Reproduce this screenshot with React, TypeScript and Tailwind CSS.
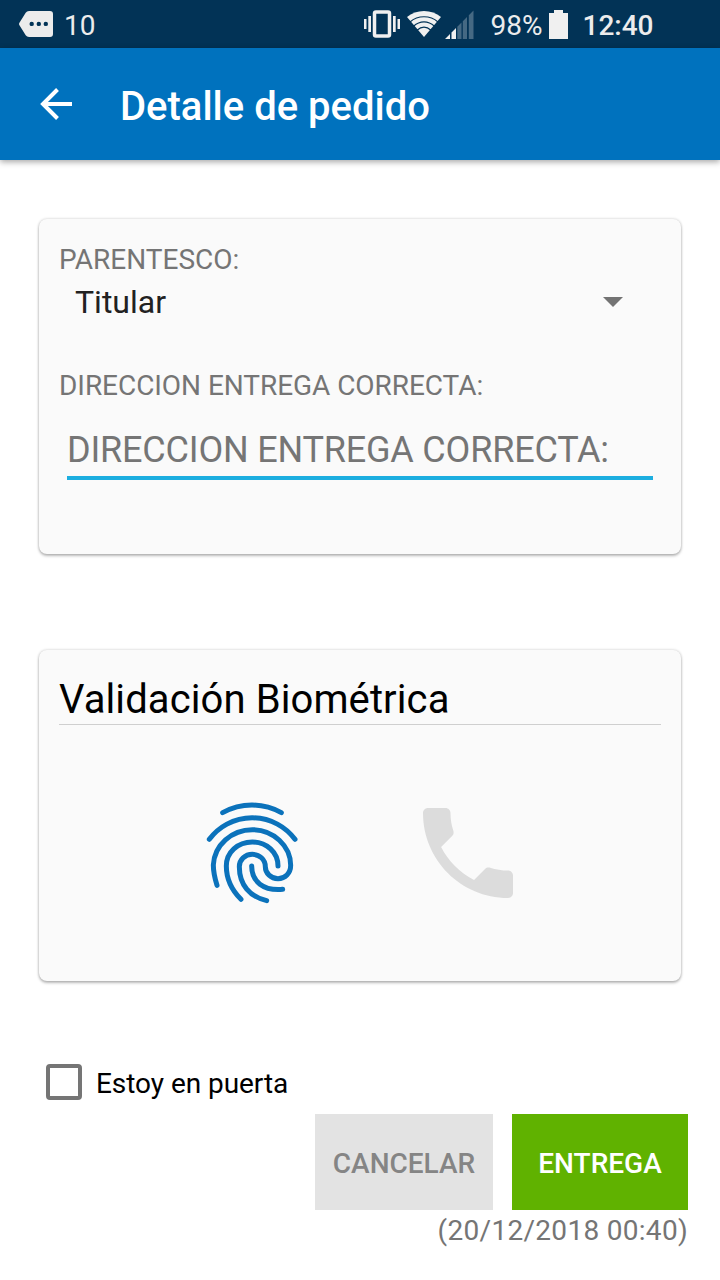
import type { ReactNode } from 'react';

interface CardProps {
  className: string;
  children: ReactNode;
}

function NotificationIcon() {
  return (
    <svg width="34" height="26" viewBox="0 0 34 26">
      <path
        fill="#ececec"
        fillRule="evenodd"
        d="M10 0H31a3 3 0 0 1 3 3V23a3 3 0 0 1-3 3H10a4 4 0 0 1-3.300-1.800L.6 14.500a2.500 2.500 0 0 1 0-3L6.700 1.800A4 4 0 0 1 10 0ZM12.700 10.700a2.200 2.200 0 1 0 0 4.400a2.200 2.200 0 1 0 0-4.400ZM19.800 10.700a2.200 2.200 0 1 0 0 4.400a2.200 2.200 0 1 0 0-4.400ZM26.800 10.700a2.200 2.200 0 1 0 0 4.400a2.200 2.200 0 1 0 0-4.400Z"
      />
    </svg>
  );
}

function VibrateIcon() {
  return (
    <svg width="36" height="28" viewBox="0 0 36 28" fill="#f0f0f0">
      <rect x="0" y="9" width="2.500" height="10" />
      <rect x="4.300" y="6" width="2.700" height="16" />
      <rect x="10.500" y="2" width="15" height="24" rx="1.500" fill="none" stroke="#f0f0f0" strokeWidth="3.500" />
      <rect x="29" y="6" width="2.700" height="16" />
      <rect x="33.500" y="9" width="2.500" height="10" />
    </svg>
  );
}

function WifiIcon() {
  return (
    <svg width="34" height="26" viewBox="0 0 34 26">
      <path fill="#f0f0f0" d="M17 26 0 6C9-2 25-2 34 6Z" />
      <g fill="none" stroke="#023356" strokeWidth="1.200">
        <path d="M3 11C11 4 23 4 31 11" />
        <path d="M6.500 15.300C13 9.500 21 9.500 27.500 15.300" />
        <path d="M10 19.300C14.500 15.300 19.500 15.300 24 19.300" />
      </g>
    </svg>
  );
}

function SignalIcon() {
  return (
    <svg width="29" height="29" viewBox="0 0 29 29">
      <path fill="#f0f0f0" d="M0 29 5 24V29ZM6.500 22.500 11 18V29H6.500Z" />
      <path
        fill="#456983"
        d="M12.300 16.700 16.500 12.500V29H12.300ZM17.800 11.200 22 7V29H17.800ZM23.800 5.200 28.500 .5V29H23.800Z"
      />
    </svg>
  );
}

function BatteryIcon() {
  return (
    <svg width="19" height="29" viewBox="0 0 19 29">
      <path fill="#f0f0f0" d="M5 0H14V3H19V29H0V3H5Z" />
    </svg>
  );
}

function BackIcon() {
  return (
    <svg width="32" height="32" viewBox="0 0 32 32">
      <path d="M17.500 1.500 3 16 17.500 30.500M3 16H32" fill="none" stroke="#fff" strokeWidth="4" />
    </svg>
  );
}

function FingerprintIcon() {
  return (
    <svg
      width="130"
      height="140"
      viewBox="0 0 390 420"
      fill="none"
      stroke="#0b72bb"
      strokeWidth="15"
      strokeLinecap="round"
    >
      <path d="M98 98A180 180 0 0 1 274 98" />
      <path d="M58 178A160 160 0 0 1 315 178" />
      <path d="M81 316C73 290 70 270 70 255C73 195 125 149 187 149C250 149 302 198 302 256C302 280 285 296 264 296C243 296 226 280 226 260C226 238 208 223 187 223C165 223 148 239 148 260C148 315 180 350 230 362" />
      <path d="M153 358C120 325 109 295 109 258C109 217 143 186 187 186C230 186 264 217 264 258" />
      <path d="M185 258C185 305 220 333 278 328" />
    </svg>
  );
}

function PhoneIcon() {
  return (
    <svg width="120" height="120" viewBox="0 0 24 24" fill="#dcdcdc">
      <path d="M6.620 10.790c1.440 2.830 3.760 5.140 6.590 6.590l2.200-2.200c.27-.27.67-.36 1.020-.24 1.120.37 2.330.57 3.570.57.55 0 1 .45 1 1V20c0 .55-.45 1-1 1-9.390 0-17-7.610-17-17 0-.55.45-1 1-1h3.500c.55 0 1 .45 1 1 0 1.250.2 2.450.57 3.570.11.35.03.74-.25 1.020l-2.200 2.200z" />
    </svg>
  );
}

function Card({ className, children }: CardProps) {
  return (
    <section
      className={`mx-[39px] rounded-lg bg-[#fafafa] px-5 shadow-[0_0_3px_rgba(0,0,0,0.2),0_2px_3px_rgba(0,0,0,0.25)] ${className}`}
    >
      {children}
    </section>
  );
}

function StatusBar() {
  return (
    <div className="flex h-12 items-center bg-[#023356] pt-1 pl-[19px] text-[28px] leading-8 text-[#ececec]">
      <div className="-mt-1">
        <NotificationIcon />
      </div>
      <span className="ml-[11px]">10</span>
      <div className="-mt-1 ml-[269px] flex items-center">
        <VibrateIcon />
        <div className="ml-[7px]">
          <WifiIcon />
        </div>
        <div className="ml-1">
          <SignalIcon />
        </div>
      </div>
      <span className="ml-4 w-[52px] whitespace-nowrap">98%</span>
      <div className="-mt-1 ml-[7px]">
        <BatteryIcon />
      </div>
      <span className="ml-3.5 font-medium">12:40</span>
    </div>
  );
}

export default function App() {
  return (
    <div className="flex h-[1280px] w-[720px] flex-col overflow-hidden bg-white font-[Roboto,sans-serif]">
      <StatusBar />
      <header className="flex h-28 shrink-0 items-center bg-[#0072be] pl-10 shadow-[0_2px_6px_rgba(0,0,0,0.35)]">
        <BackIcon />
        <h1 className="mt-1.5 ml-12 text-[40px] leading-12 font-medium text-white">Detalle de pedido</h1>
      </header>

      <Card className="mt-[59px] h-[335px] shrink-0 pt-[25px]">
        <p className="text-[28px] leading-8 text-[#757575]">PARENTESCO:</p>
        <button className="flex h-[52px] w-full items-center justify-between pr-[38px] pl-4 text-left text-[32px] text-[#212121]">
          Titular
          <svg width="20" height="10" viewBox="0 0 20 10">
            <path d="M0 0H20L10 10Z" fill="#737373" />
          </svg>
        </button>
        <p className="mt-[42px] text-[28px] leading-8 tracking-[-0.05px] text-[#757575]">DIRECCION ENTREGA CORRECTA:</p>
        <input
          className="mt-6 ml-2 block h-[54px] w-[586px] border-b-4 border-[#1caee0] pb-0.5 text-[36px] tracking-[-0.19px] outline-none placeholder:text-[#757575] placeholder:opacity-100"
          placeholder="DIRECCION ENTREGA CORRECTA:"
        />
      </Card>

      <Card className="mt-24 h-[331px] shrink-0 pt-6">
        <h2 className="h-[51px] border-b border-[#cfcfcf] text-[40px] leading-[52px] tracking-[0.1px] text-black">
          Validación Biométrica
        </h2>
        <div className="flex gap-[88px] pt-[55px] pl-[131px]">
          <FingerprintIcon />
          <div className="mt-[13px]">
            <PhoneIcon />
          </div>
        </div>
      </Card>

      <label className="mt-[83px] ml-[46px] flex h-9 items-center text-[28px] text-black">
        <span className="size-9 rounded-sm border-4 border-[#757575]" />
        <span className="mt-1 ml-3.5 tracking-[-0.05px]">Estoy en puerta</span>
      </label>

      <div className="mt-3.5 flex justify-end gap-[19px] pr-8 text-[28px] font-medium">
        <button className="h-24 w-[178px] bg-[#e3e3e3] pt-1 text-[#858585]">CANCELAR</button>
        <button className="h-24 w-44 bg-[#60b200] pt-1 text-white">ENTREGA</button>
      </div>
      <p className="mt-[5px] pr-8 text-right text-[28px] leading-8 tracking-[0.3px] text-[#757575]">
        (20/12/2018 00:40)
      </p>
    </div>
  );
}
